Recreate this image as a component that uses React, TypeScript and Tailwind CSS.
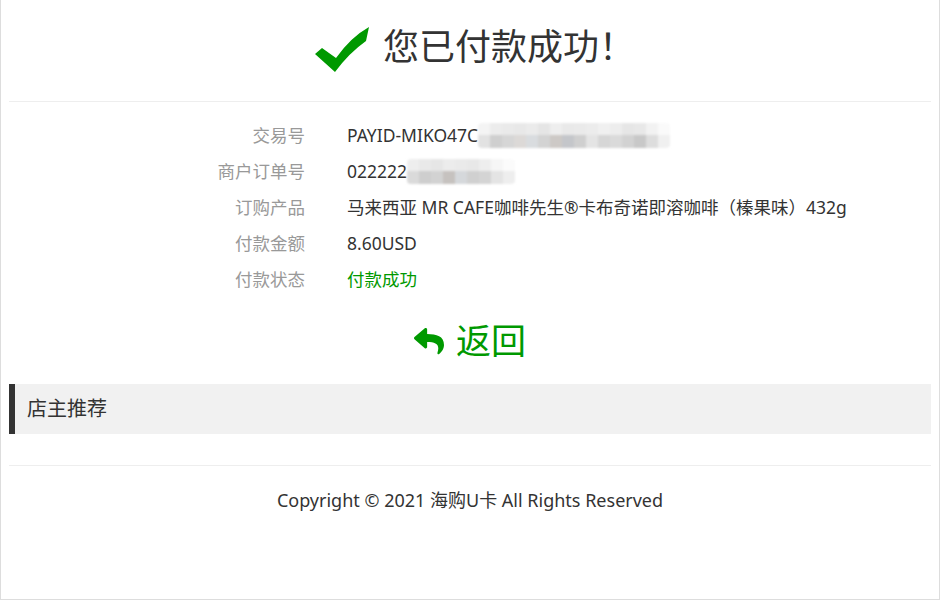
import React from "react";
import { FaReply } from "react-icons/fa";

const FONT = "font-['Noto_Sans','Noto_Sans_CJK_SC',sans-serif]";

// pixelated placeholder for the masked part of ids
const blurTop1 = ["bg-[#f4f4f4]", "bg-[#ececec]", "bg-[#eaeaea]", "bg-[#e8e8e8]", "bg-[#ebebeb]", "bg-[#e5e5e5]", "bg-[#eeeeee]", "bg-[#e9e9e9]", "bg-[#eaeaea]", "bg-[#ececec]", "bg-[#f0f0f0]", "bg-[#ededed]", "bg-[#e6e6e6]", "bg-[#e8e8e8]", "bg-[#f2f2f2]", "bg-[#fafafa]"];
const blurBot1 = ["bg-[#e2e2e2]", "bg-[#cfcfcf]", "bg-[#d6d6d6]", "bg-[#dcd9d7]", "bg-[#d9dcdf]", "bg-[#d3d3d3]", "bg-[#cdc9c6]", "bg-[#c4c6ca]", "bg-[#cfcfcf]", "bg-[#e4e4e4]", "bg-[#d6d6d6]", "bg-[#dadada]", "bg-[#d2d2d2]", "bg-[#c8c8c8]", "bg-[#dddddd]", "bg-[#f0f0f0]"];
const blurTop2 = ["bg-[#eeeeee]", "bg-[#e9e9e9]", "bg-[#e6e6e6]", "bg-[#ececec]", "bg-[#eaeaea]", "bg-[#e8e8e8]", "bg-[#eeeeee]", "bg-[#f6f6f6]", "bg-[#fbfbfb]"];
const blurBot2 = ["bg-[#dadada]", "bg-[#cecece]", "bg-[#d2d2d2]", "bg-[#c6c2bf]", "bg-[#d5d8db]", "bg-[#d0d0d0]", "bg-[#d4d4d4]", "bg-[#e4e4e4]", "bg-[#eeeeee]"];

function Masked({ top, bottom }: { top: string[]; bottom: string[] }) {
  return (
    <span className="inline-flex flex-col blur-[1px] rounded-sm overflow-hidden">
      <span className="flex h-[12px]">
        {top.map((c, i) => (
          <span key={i} className={`w-3 h-full ${c}`} />
        ))}
      </span>
      <span className="flex h-[13px]">
        {bottom.map((c, i) => (
          <span key={i} className={`w-3 h-full ${c}`} />
        ))}
      </span>
    </span>
  );
}

function Row({ label, children }: { label: string; children: React.ReactNode }) {
  return (
    <div className="flex items-center h-9">
      <div className="w-[296px] text-right text-[#999] text-[17.5px]">{label}</div>
      <div className="ml-[42px] flex items-center text-[#333] text-[17.5px]">{children}</div>
    </div>
  );
}

export default function App() {
  return (
    <div className={`w-[940px] h-[600px] bg-white border-l border-r border-b border-[#dddddd] px-2 ${FONT}`}>
      {/* header */}
      <div className="h-[102px] flex items-center justify-center border-b border-[#eeeeee]">
        <div className="flex items-center ml-[10px] -mt-[8px]">
          <svg width="56" height="48" viewBox="0 0 56 48" className="mr-3 mt-[4px]">
            <path d="M0 29 L7 23 L21 33 Q36 12 54 2 L51 16 Q34 28 20 47 Z" fill="#009900" />
          </svg>
          <div className="text-[36px] text-[#333] leading-none">您已付款成功！</div>
        </div>
      </div>

      {/* order info */}
      <div className="pt-[15px]">
        <Row label="交易号">
          <span>PAYID-MIKO47C</span>
          <Masked top={blurTop1} bottom={blurBot1} />
        </Row>
        <Row label="商户订单号">
          <span>022222</span>
          <Masked top={blurTop2} bottom={blurBot2} />
        </Row>
        <Row label="订购产品">
          <span>马来西亚 MR CAFE咖啡先生®卡布奇诺即溶咖啡（榛果味）432g</span>
        </Row>
        <Row label="付款金额">
          <span>8.60USD</span>
        </Row>
        <Row label="付款状态">
          <span className="text-[#009900]">付款成功</span>
        </Row>
      </div>

      {/* back */}
      <div className="h-[87px] flex items-center justify-center gap-3 text-[#009900]">
        <FaReply className="w-[30px] h-[30px]" />
        <span className="text-[35px] leading-none">返回</span>
      </div>

      {/* recommend */}
      <div className="h-[50px] bg-[#f1f1f1] border-l-[6px] border-[#333] flex items-center pl-3">
        <span className="text-[20px] text-[#333]">店主推荐</span>
      </div>

      <div className="mt-[31px] border-t border-[#eeeeee] h-[70px] flex items-center justify-center">
        <span className="text-[18px] text-[#333]">Copyright © 2021 海购U卡 All Rights Reserved</span>
      </div>
    </div>
  );
}
